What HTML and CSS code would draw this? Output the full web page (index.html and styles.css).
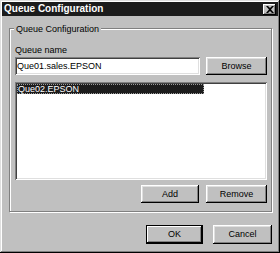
FILE: index.html
```html
<!DOCTYPE html>
<html lang="en">
<head>
    <meta charset="UTF-8">
    <meta name="viewport" content="width=device-width, initial-scale=1.0">
    <title>Queue Configuration</title>
    <link rel="stylesheet" href="styles.css">
</head>
<body>
    <div class="window">
        <div class="titlebar">
            <span class="title">Queue Configuration</span>
            <span class="close">
                <svg width="8" height="7" viewBox="0 0 8 7"><path d="M0 0h2l2 2 2-2h2L5 3.5 8 7H6L4 5 2 7H0l3-3.5z" fill="#000"/></svg>
            </span>
        </div>
        <div class="content">
            <div class="group">
                <div class="legend">Queue Configuration</div>
                <div class="label">Queue name</div>
                <div class="row">
                    <div class="field">Que01.sales.EPSON</div>
                    <button class="btn browse">Browse</button>
                </div>
                <div class="list">
                    <div class="item selected">Que02.EPSON</div>
                </div>
                <div class="actions">
                    <button class="btn add">Add</button>
                    <button class="btn remove">Remove</button>
                </div>
            </div>
            <div class="footer">
                <button class="btn ok default">OK</button>
                <button class="btn cancel">Cancel</button>
            </div>
        </div>
    </div>
</body>
</html>
```

FILE: styles.css
```css
body { margin: 0; background: #fff; font-family: "Liberation Sans", Arial, sans-serif; font-size: 9px; color: #000; }
.window { width: 280px; height: 253px; box-sizing: border-box; padding: 2px; background: #c0c0c0;
    box-shadow: inset -1px -1px #000, inset 1px 1px #dfdfdf, inset -2px -2px #808080, inset 2px 2px #fff; }
.titlebar { height: 14px; background: #1c1c1c; color: #fff; display: flex; align-items: center; justify-content: space-between; }
.title { font-weight: bold; font-size: 10px; line-height: 14px; padding-left: 2px; }
.close { width: 13px; height: 11px; margin-right: 2px; background: #c0c0c0; display: flex; align-items: center; justify-content: center;
    box-shadow: inset -1px -1px #000, inset 1px 1px #fff, inset -2px -2px #808080; }
.content { padding: 12px 6px 0 7px; }
.group { border: 1px solid #808080; box-shadow: inset 1px 1px #fff, 1px 1px #fff; padding: 0 4px 8px 5px; }
.legend { width: fit-content; margin: -5px 0 0 -1px; padding: 0 2px; line-height: 11px; background: #c0c0c0; }
.label { margin-top: 10px; line-height: 11px; }
.row { display: flex; gap: 6px; margin-top: 1px; }
.field { flex: 1; height: 18px; line-height: 18px; padding: 0 2px; background: #fff;
    box-shadow: inset 1px 1px #808080, inset -1px -1px #fff, inset 2px 2px #404040, inset -2px -2px #dfdfdf; }
.btn { font: inherit; color: #000; border: 0; padding: 0; background: #c0c0c0; height: 18px; line-height: 18px; text-align: center;
    box-shadow: inset -1px -1px #000, inset 1px 1px #fff, inset -2px -2px #808080, inset 2px 2px #dfdfdf; }
.browse { width: 61px; }
.list { height: 98px; margin-top: 7px; padding: 2px; box-sizing: border-box; background: #fff;
    box-shadow: inset 1px 1px #808080, inset -1px -1px #fff, inset 2px 2px #404040, inset -2px -2px #dfdfdf; }
.item { width: 187px; height: 10px; line-height: 10px; padding-left: 1px; box-sizing: border-box; }
.item.selected { background: #1c1c1c; color: #fff; outline: 1px dotted #9a9a9a; outline-offset: -1px; }
.actions { display: flex; justify-content: flex-end; gap: 7px; margin-top: 5px; }
.add { width: 58px; }
.remove { width: 61px; }
.footer { display: flex; justify-content: flex-end; gap: 10px; margin-top: 13px; }
.footer .btn { height: 19px; line-height: 19px; }
.ok { width: 57px; }
.cancel { width: 59px; }
.default { box-shadow: inset 0 0 0 1px #000, inset -2px -2px #000, inset 2px 2px #fff, inset -3px -3px #808080; }
```
